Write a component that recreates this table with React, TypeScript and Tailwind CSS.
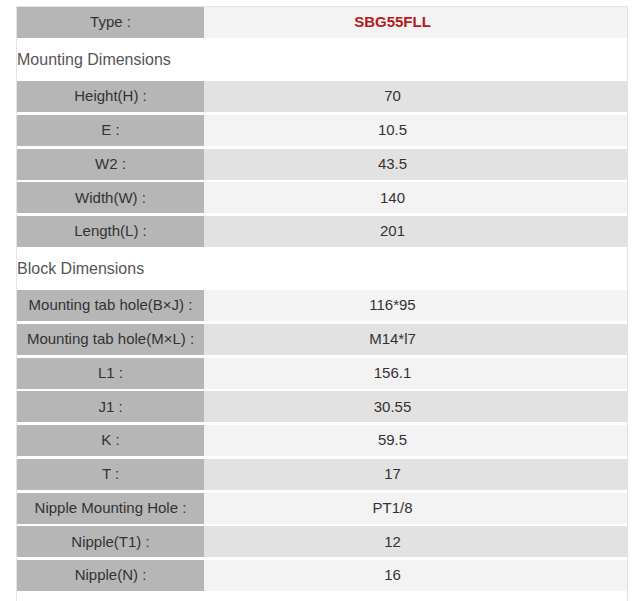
import React from "react";

type Row = { label: string; value: string; dark: boolean };

const mounting: Row[] = [
  { label: "Height(H) :", value: "70", dark: true },
  { label: "E :", value: "10.5", dark: false },
  { label: "W2 :", value: "43.5", dark: true },
  { label: "Width(W) :", value: "140", dark: false },
  { label: "Length(L) :", value: "201", dark: true },
];

const block: Row[] = [
  { label: "Mounting tab hole(B×J) :", value: "116*95", dark: false },
  { label: "Mounting tab hole(M×L) :", value: "M14*l7", dark: true },
  { label: "L1 :", value: "156.1", dark: false },
  { label: "J1 :", value: "30.55", dark: true },
  { label: "K :", value: "59.5", dark: false },
  { label: "T :", value: "17", dark: true },
  { label: "Nipple Mounting Hole :", value: "PT1/8", dark: false },
  { label: "Nipple(T1) :", value: "12", dark: true },
  { label: "Nipple(N) :", value: "16", dark: false },
];

function DataRow({ row }: { row: Row }) {
  return (
    <div className="flex h-[31px] text-[15px] text-[#333]">
      <div className="w-[187px] shrink-0 bg-[#b6b6b6] flex items-center justify-center">
        {row.label}
      </div>
      <div
        className={
          "flex-1 flex items-center justify-center pr-[46px] " +
          (row.dark ? "bg-[#e2e2e2]" : "bg-[#f3f3f3]")
        }
      >
        {row.value}
      </div>
    </div>
  );
}

function Header({ text }: { text: string }) {
  return (
    <div className="h-[37.5px] flex items-center text-[16px] text-[#555]">
      {text}
    </div>
  );
}

export default function App() {
  return (
    <div
      className="w-[637px] h-[601px] overflow-hidden bg-white"
      style={{ fontFamily: '"Liberation Sans", Arial, sans-serif' }}
    >
      <div className="ml-[16px] mt-[6px] w-[612px] border-t border-l border-r border-[#e3e3e3] pb-[40px] flex flex-col gap-[2.75px]">
        <div className="flex h-[31px] text-[15px] text-[#333]">
          <div className="w-[187px] shrink-0 bg-[#b6b6b6] flex items-center justify-center">
            Type :
          </div>
          <div className="flex-1 flex items-center justify-center pr-[46px] bg-[#f3f3f3] font-bold text-[#b3191e]">
            SBG55FLL
          </div>
        </div>
        <Header text="Mounting Dimensions" />
        {mounting.map((r) => (
          <DataRow key={r.label} row={r} />
        ))}
        <Header text="Block Dimensions" />
        {block.map((r) => (
          <DataRow key={r.label} row={r} />
        ))}
      </div>
    </div>
  );
}
